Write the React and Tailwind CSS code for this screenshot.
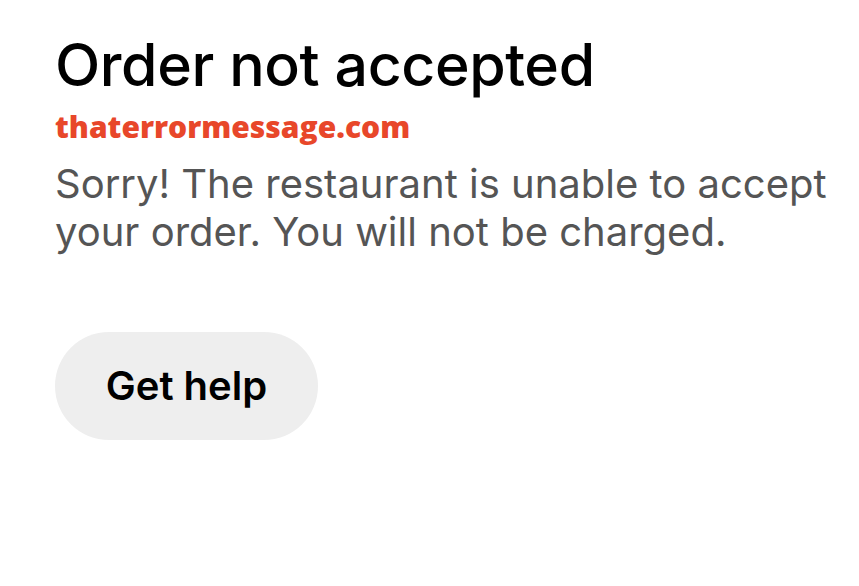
export default function App() {
  return (
    <main className="min-h-screen w-full bg-white pl-[55px] pt-[30px] font-['Inter',sans-serif]">
      <h1 className="text-[59px] font-medium leading-[70px] tracking-[-0.4px] text-black">
        Order not accepted
      </h1>
      <p className="mt-[10px] text-[30px] font-extrabold leading-[34px] text-[#e8472a] font-['Open_Sans',sans-serif]">
        thaterrormessage.com
      </p>
      <p className="mt-[16px] w-[800px] text-[40px] leading-[48px] text-[#555555]">
        Sorry! The restaurant is unable to accept your order. You will not be
        charged.
      </p>
      <button
        type="button"
        className="mt-[76px] flex h-[108px] w-[263px] items-center justify-center rounded-full bg-[#eeeeee] text-[40px] font-semibold text-black"
      >
        Get help
      </button>
    </main>
  );
}
